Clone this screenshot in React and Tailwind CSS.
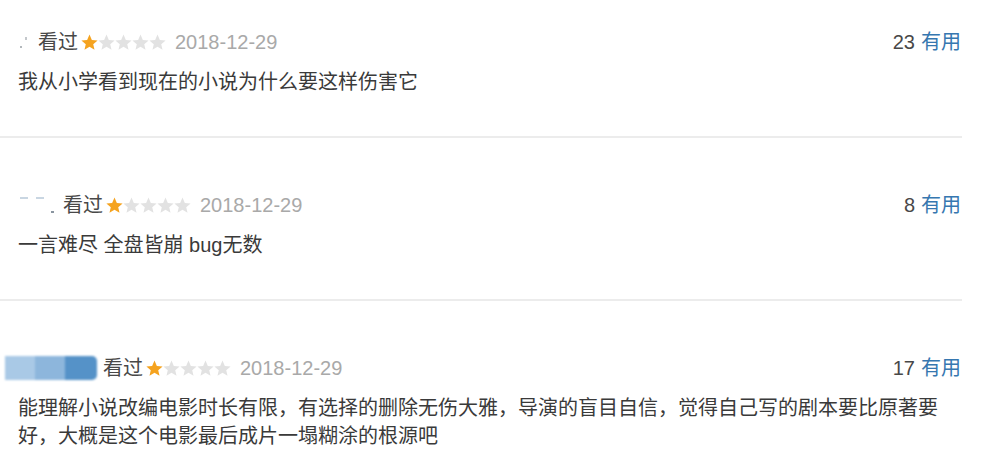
import React from "react";

const FONT = { fontFamily: '"Liberation Sans", "Noto Sans CJK SC", sans-serif' };

function Star({ on }) {
  return (
    <svg width="17" height="17" viewBox="1.5 1.5 21 21" className="block">
      <path
        d="M12 2.2l2.9 6.6 7.1.6-5.4 4.7 1.6 7-6.2-3.7-6.2 3.7 1.6-7L2 9.4l7.1-.6z"
        fill={on ? "#f5a31f" : "#e2e2e2"}
      />
    </svg>
  );
}

function Stars({ count }) {
  return (
    <span className="flex items-center">
      {[0, 1, 2, 3, 4].map((i) => (
        <Star key={i} on={i < count} />
      ))}
    </span>
  );
}

function NameOne() {
  return (
    <span className="relative inline-block h-[28px] w-[17px]">
      <span className="absolute left-[2px] top-[18px] h-[2px] w-[2px] rounded-full bg-[#9aa0a6]" />
      <span className="absolute left-[7px] top-[9px] h-[3px] w-[2px] bg-[#c4c8cc]" />
    </span>
  );
}

function NameTwo() {
  return (
    <span className="relative inline-block h-[28px] w-[43px]">
      <span className="absolute left-[2px] top-[6px] h-[2px] w-[8px] bg-[#c9d6e2]" />
      <span className="absolute left-[18px] top-[6px] h-[2px] w-[8px] bg-[#c9d6e2]" />
      <span className="absolute left-[33px] top-[20px] h-[2px] w-[3px] bg-[#8a95a0]" />
    </span>
  );
}

function NameThree() {
  return (
    <span className="-ml-[13px] mr-[6px] flex h-[24px] w-[92px] overflow-hidden rounded-r-[5px] blur-[0.8px]">
      <span className="h-full w-[30px] bg-[#a9c9e6]" />
      <span className="h-full w-[30px] bg-[#8db6dc]" />
      <span className="h-full w-[32px] bg-[#5592c8]" />
    </span>
  );
}

const reviews = [
  {
    name: <NameOne />,
    gap: "ml-[3px]",
    useful: 23,
    text: "我从小学看到现在的小说为什么要这样伤害它",
  },
  {
    name: <NameTwo />,
    gap: "ml-[2px]",
    useful: 8,
    text: "一言难尽 全盘皆崩 bug无数",
  },
  {
    name: <NameThree />,
    gap: "",
    useful: 17,
    text: "能理解小说改编电影时长有限，有选择的删除无伤大雅，导演的盲目自信，觉得自己写的剧本要比原著要好，大概是这个电影最后成片一塌糊涂的根源吧",
  },
];

export default function App() {
  return (
    <div className="h-[466px] overflow-hidden bg-white" style={FONT}>
      <div className="w-[962px] pt-[28px]">
        {reviews.map((r, i) => (
          <div
            key={i}
            className={`border-b-2 border-[#ececec] pb-[40px] pl-[18px] ${i > 0 ? "pt-[53px]" : ""}`}
          >
            <div className="flex h-[28px] items-center justify-between text-[20px] leading-[28px]">
              <div className="flex items-center">
                {r.name}
                <span className={`${r.gap} text-[#484848]`}>看过</span>
                <span className="ml-[3px]">
                  <Stars count={1} />
                </span>
                <span className="ml-[9px] text-[#a9a9a9]">2018-12-29</span>
              </div>
              <div className="flex items-center pr-[1px]">
                <span className="text-[#484848]">{r.useful}</span>
                <span className="ml-[6px] text-[#3677b0]">有用</span>
              </div>
            </div>
            <p className="mt-[12px] pr-[10px] text-[20px] leading-[28px] text-[#3a3a3a]">
              {r.text}
            </p>
          </div>
        ))}
      </div>
    </div>
  );
}
